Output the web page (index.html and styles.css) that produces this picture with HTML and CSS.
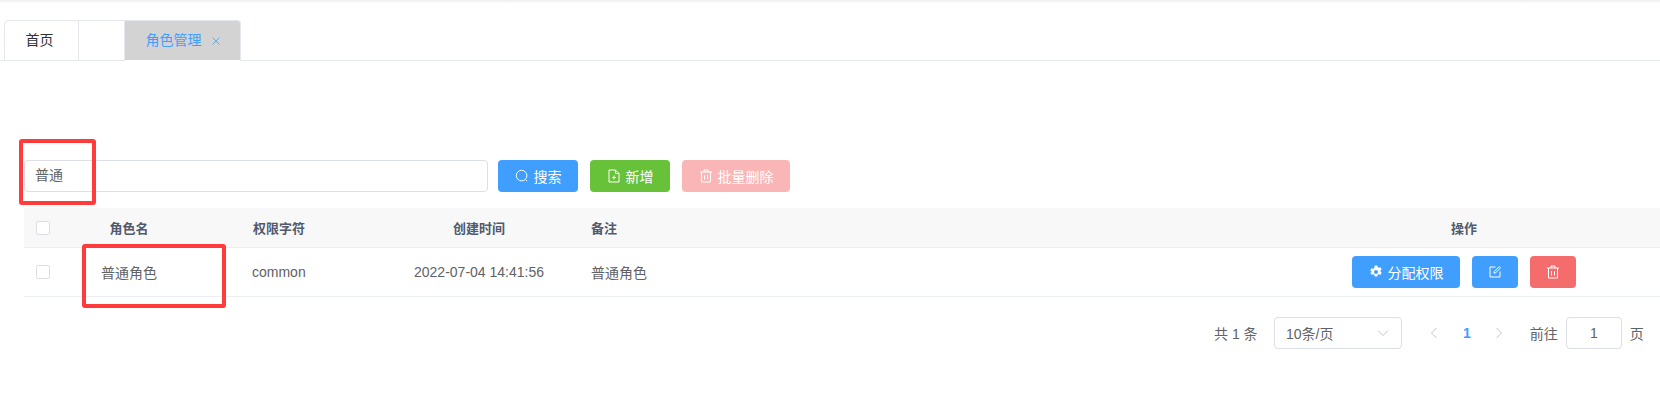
FILE: index.html
```html
<!DOCTYPE html>
<html lang="zh-CN">
<head>
  <meta charset="UTF-8" />
  <title>角色管理</title>
  <link rel="stylesheet" href="styles.css">
</head>
<body>

  <div class="topshadow"></div>

  <div class="tabs">
    <div class="tab tab-home">首页</div>
    <div class="tab tab-blank"></div>
    <div class="tab tab-active">角色管理
      <svg class="tab-close" viewBox="0 0 8 8"><path d="M.5.5l7 7M7.500.5l-7 7"/></svg>
    </div>
  </div>

  <div class="toolbar">
    <div class="search-input">普通</div>
    <button class="btn btn-blue btn-search">
      <svg class="ico" viewBox="0 0 14 14"><circle cx="6.6" cy="6.6" r="5.3"/><path d="M10.6 10.6l1.6 1.6"/></svg>搜索
    </button>
    <button class="btn btn-green btn-search">
      <svg class="ico" viewBox="0 0 14 14"><path d="M8.500 1H2v12h10V4.500zM8.500 1v3.500H12M7 6.500v4M5 8.500h4"/></svg>新增
    </button>
    <button class="btn btn-pale btn-del">
      <svg class="ico" viewBox="0 0 14 14"><path d="M1 3h12M5 3V1h4v2M2.500 3v10h9V3M5.500 6v4.500M8.500 6v4.500"/></svg>批量删除
    </button>
  </div>

  <div class="table">
    <div class="row row-head">
      <div class="cell cell-check"><span class="check"></span></div>
      <div class="cell cell-name">角色名</div>
      <div class="cell cell-key">权限字符</div>
      <div class="cell cell-time">创建时间</div>
      <div class="cell cell-note">备注</div>
      <div class="cell cell-ops">操作</div>
    </div>
    <div class="row row-body">
      <div class="cell cell-check"><span class="check"></span></div>
      <div class="cell cell-name">普通角色</div>
      <div class="cell cell-key">common</div>
      <div class="cell cell-time">2022-07-04 14:41:56</div>
      <div class="cell cell-note">普通角色</div>
      <div class="cell cell-ops">
        <button class="btn btn-blue btn-perm">
          <svg class="ico ico-gear" viewBox="0 0 14 14"><path fill-rule="evenodd" d="M5.800.5h2.400l.6 1.800 1 .5 1.700-.6 1.200 2-1.200 1.300v1l1.200 1.300-1.200 2-1.700-.6-1 .5-.6 1.800H5.800l-.6-1.800-1-.5-1.700.6-1.200-2L2.500 7.500v-1L1.300 5.200l1.200-2 1.700.6 1-.5zM7 5a2 2 0 1 0 0 4 2 2 0 0 0 0-4z"/></svg>分配权限
        </button>
        <button class="btn btn-blue btn-icon">
          <svg class="ico" viewBox="0 0 14 14"><path d="M7.500 2H2v10h10V6.500M6 8.200l.4-1.800L11.200 1.600l1.300 1.300L7.700 7.700z"/></svg>
        </button>
        <button class="btn btn-red btn-icon">
          <svg class="ico" viewBox="0 0 14 14"><path d="M1 3h12M5 3V1h4v2M2.500 3v10h9V3M5.500 6v4.500M8.500 6v4.500"/></svg>
        </button>
      </div>
    </div>
  </div>

  <div class="pager">
    <span class="pager-total">共 1 条</span>
    <div class="pager-size">10条/页
      <svg class="chev" viewBox="0 0 12 8"><path d="M1 1.500l5 5 5-5"/></svg>
    </div>
    <svg class="arrow arrow-prev" viewBox="0 0 8 12"><path d="M6.500 1L1.500 6l5 5"/></svg>
    <span class="pager-num">1</span>
    <svg class="arrow arrow-next" viewBox="0 0 8 12"><path d="M1.500 1l5 5-5 5"/></svg>
    <span class="pager-goto">前往</span>
    <div class="pager-input">1</div>
    <span class="pager-unit">页</span>
  </div>

  <!-- red marks drawn over the screenshot -->
  <div class="mark mark-input"></div>
  <div class="mark mark-cell"></div>

</body>
</html>
```

FILE: styles.css
```css
html, body {
  margin: 0;
  padding: 0;
  height: 412px;
  overflow: hidden;
  background-color: #ffffff;
}
body {
  position: relative;
  font-family: "Liberation Sans", "Noto Sans CJK SC", sans-serif;
  font-size: 14px;
  color: #606266;
}
.topshadow {
  height: 3px;
  background: linear-gradient(#f0f0f0, #fbfbfb);
}
.tabs {
  display: flex;
  box-sizing: border-box;
  height: 41px;
  margin-top: 17px;
  padding-left: 4px;
  border-bottom: 1px solid #e4e7ed;
}
.tab {
  box-sizing: border-box;
  height: 41px;
  line-height: 39px;
  border: 1px solid #e4e7ed;
  border-left: none;
  text-align: center;
}
.tab-home {
  width: 75px;
  padding-right: 4px;
  border-left: 1px solid #e4e7ed;
  border-top-left-radius: 4px;
  color: #303133;
}
.tab-blank {
  width: 46px;
}
.tab-active {
  display: flex;
  align-items: center;
  justify-content: center;
  gap: 10px;
  width: 116px;
  border-bottom-color: #ffffff;
  border-top-right-radius: 4px;
  background-color: #d3d3d3;
  color: #409eff;
}
.tab-close {
  width: 8px;
  height: 8px;
  fill: none;
  stroke: #409eff;
  stroke-width: 0.8;
}
.toolbar {
  display: flex;
  gap: 12px;
  margin: 99px 0 0 24px;
}
.search-input {
  box-sizing: border-box;
  width: 464px;
  height: 32px;
  margin-right: -2px;
  padding-left: 10px;
  line-height: 29px;
  border: 1px solid #dcdfe6;
  border-radius: 4px;
}
.btn {
  display: inline-flex;
  align-items: center;
  justify-content: center;
  box-sizing: border-box;
  height: 32px;
  padding: 0 0 1px;
  border: none;
  border-radius: 4px;
  color: #ffffff;
  font-family: inherit;
  font-size: 14px;
  cursor: pointer;
}
.btn-blue { background-color: #409eff; }
.btn-green { background-color: #67c23a; }
.btn-pale { background-color: #fab6b6; }
.btn-red { background-color: #f56c6c; }
.btn-search { width: 80px; }
.btn-del { width: 108px; }
.btn-perm { width: 108px; }
.btn-icon { width: 46px; }
.ico {
  width: 14px;
  height: 14px;
  margin-right: 5px;
  fill: none;
  stroke: #ffffff;
  stroke-width: 1;
}
.btn-icon .ico {
  margin-right: 0;
}
.ico-gear {
  fill: #ffffff;
  stroke: none;
}
.table {
  margin: 16px 0 0 24px;
}
.row {
  display: grid;
  grid-template-columns: 44px 174px 158px 158px 1fr 392px;
  align-items: center;
  box-sizing: border-box;
  border-bottom: 1px solid #ebeef5;
}
.row-head {
  height: 40px;
  background-color: #f8f8f9;
  color: #515a6e;
  font-size: 13px;
  font-weight: bold;
}
.row-body {
  height: 49px;
}
.cell-check {
  padding-left: 12px;
  display: flex;
}
.check {
  box-sizing: border-box;
  width: 14px;
  height: 14px;
  background-color: #ffffff;
  border: 1px solid #dcdfe6;
  border-radius: 2px;
}
.cell-name {
  padding-right: 52px;
  text-align: center;
}
.cell-key {
  padding-left: 10px;
}
.row-head .cell-key {
  padding-left: 11px;
}
.cell-time {
  text-align: center;
}
.cell-note {
  padding-left: 33px;
}
.cell-ops {
  display: flex;
  justify-content: center;
  gap: 12px;
}
.pager {
  display: flex;
  align-items: center;
  height: 32px;
  margin-top: 20px;
  padding-left: 1214px;
}
.pager-total {
  width: 60px;
}
.pager-size {
  display: flex;
  align-items: center;
  justify-content: space-between;
  box-sizing: border-box;
  width: 128px;
  height: 32px;
  padding: 0 12px 0 11px;
  border: 1px solid #dcdfe6;
  border-radius: 4px;
}
.chev {
  width: 12px;
  height: 8px;
  fill: none;
  stroke: #c0c4cc;
  stroke-width: 1;
}
.arrow {
  width: 8px;
  height: 12px;
  fill: none;
  stroke: #c0c4cc;
  stroke-width: 1;
}
.arrow-prev {
  margin-left: 28px;
}
.pager-num {
  margin-left: 25px;
  color: #409eff;
  font-weight: bold;
}
.arrow-next {
  margin-left: 24px;
}
.pager-goto {
  margin-left: 27px;
}
.pager-input {
  box-sizing: border-box;
  width: 56px;
  height: 32px;
  margin-left: 8px;
  line-height: 30px;
  text-align: center;
  border: 1px solid #dcdfe6;
  border-radius: 4px;
}
.pager-unit {
  margin-left: 8px;
}
.mark {
  position: absolute;
  box-sizing: border-box;
  border: 4px solid #ff3b3b;
  border-radius: 3px;
}
.mark-input {
  left: 19px;
  top: 139px;
  width: 77px;
  height: 66px;
}
.mark-cell {
  left: 82px;
  top: 244px;
  width: 144px;
  height: 64px;
}
```
